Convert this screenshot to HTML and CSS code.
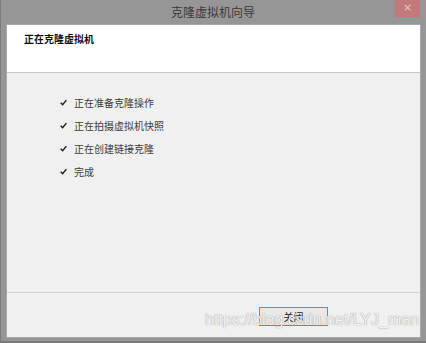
FILE: index.html
```html
<!DOCTYPE html>
<html>
<head>
<meta charset="utf-8">
<link rel="stylesheet" href="styles.css">
</head>
<body>
<div class="window">
  <div class="titlebar">
    <span class="title">克隆虚拟机向导</span>
    <div class="close">×</div>
  </div>
  <div class="content">
    <div class="header">
      <span class="header-text">正在克隆虚拟机</span>
    </div>
    <div class="body">
      <ul class="steps">
        <li><svg class="check" viewBox="0 0 8 8"><path d="M0.8 4.3 L3 6.5 L7.3 1.3" fill="none" stroke="#1a1a1a" stroke-width="1.6"/></svg><span>正在准备克隆操作</span></li>
        <li><svg class="check" viewBox="0 0 8 8"><path d="M0.8 4.3 L3 6.5 L7.3 1.3" fill="none" stroke="#1a1a1a" stroke-width="1.6"/></svg><span>正在拍摄虚拟机快照</span></li>
        <li><svg class="check" viewBox="0 0 8 8"><path d="M0.8 4.3 L3 6.5 L7.3 1.3" fill="none" stroke="#1a1a1a" stroke-width="1.6"/></svg><span>正在创建链接克隆</span></li>
        <li><svg class="check" viewBox="0 0 8 8"><path d="M0.8 4.3 L3 6.5 L7.3 1.3" fill="none" stroke="#1a1a1a" stroke-width="1.6"/></svg><span>完成</span></li>
      </ul>
    </div>
    <div class="footer">
      <button class="btn">关闭</button>
    </div>
  </div>
  <div class="watermark">https://blog.csdn.net/LYJ_man</div>
</div>
</body>
</html>
```

FILE: styles.css
```css
html, body {
  margin: 0;
  padding: 0;
}
body {
  width: 426px;
  height: 343px;
  overflow: hidden;
  font-family: "Noto Sans CJK SC", "Noto Sans", sans-serif;
}
.window {
  position: relative;
  box-sizing: border-box;
  width: 426px;
  height: 343px;
  background: #969696;
  border-left: 1px solid #7c7c7c;
  border-bottom: 2px solid #7a7a7a;
  display: flex;
  flex-direction: column;
}
.titlebar {
  position: relative;
  height: 25px;
  display: flex;
  align-items: center;
  justify-content: center;
  flex: none;
}
.title {
  font-size: 12px;
  color: #3a3a3a;
  line-height: 1;
  margin-top: -1px;
  margin-left: -1px;
}
.close {
  position: absolute;
  top: 0;
  right: 6px;
  width: 25px;
  height: 17px;
  background: #c27979;
  color: #e6c6c6;
  font-family: "DejaVu Sans", sans-serif;
  font-size: 11px;
  line-height: 16px;
  text-align: center;
}
.content {
  flex: 1;
  margin: 0 6px 4px 6px;
  background: #f0f0f0;
  display: flex;
  flex-direction: column;
  box-shadow: 0 0 0 1px #a8a8a8;
}
.header {
  height: 47px;
  flex: none;
  background: #fff;
  border-bottom: 1px solid #c6c6c6;
  box-sizing: content-box;
  padding-left: 17px;
}
.header-text {
  display: block;
  font-size: 10px;
  font-weight: bold;
  color: #111;
  line-height: 12px;
  margin-top: 8px;
}
.body {
  flex: 1;
}
.steps {
  list-style: none;
  margin: 0;
  padding: 18px 0 0 53px;
}
.steps li {
  height: 23px;
  display: flex;
  align-items: center;
  font-size: 10px;
  color: #3c3c3c;
}
.check {
  width: 7px;
  height: 7px;
  margin-right: 7px;
}
.footer {
  height: 44px;
  flex: none;
  border-top: 1px solid #d2d2d2;
  display: flex;
  justify-content: flex-end;
  align-items: flex-start;
  padding-right: 92px;
}
.btn {
  margin-top: 14px;
  width: 69px;
  height: 19px;
  padding: 0;
  border: 1px solid #3c9be6;
  background: #e8e8e8;
  font-family: "Noto Sans CJK SC", sans-serif;
  font-size: 10px;
  color: #222;
  line-height: 15px;
}
.watermark {
  position: absolute;
  left: 204px;
  top: 311px;
  font-family: "Liberation Sans", Arial, sans-serif;
  font-size: 16px;
  color: rgba(255, 255, 255, 0.9);
  text-shadow: 0 0 1px rgba(100, 100, 100, 0.55), 0 0 1px rgba(100, 100, 100, 0.4);
  white-space: nowrap;
  pointer-events: none;
}
```
